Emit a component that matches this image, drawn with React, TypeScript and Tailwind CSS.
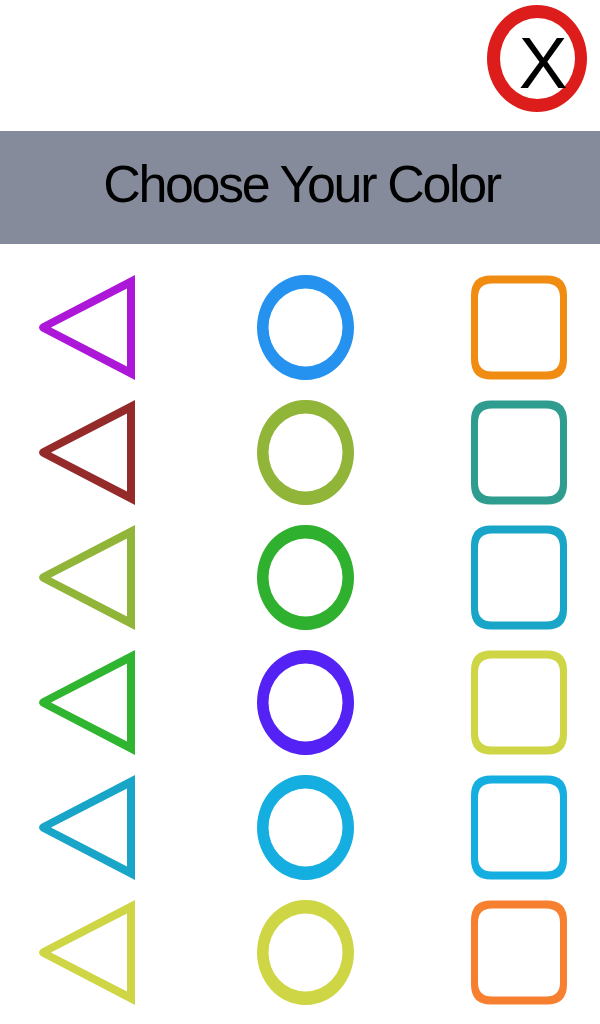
const rows = [
  ["#ad17d8", "#2492ee", "#f18c13"],
  ["#952a2a", "#91b538", "#2f9c90"],
  ["#91b538", "#2fb02f", "#18a5c8"],
  ["#2fb52f", "#5522f5", "#cfd646"],
  ["#18a5c8", "#14aee0", "#14aee0"],
  ["#cfd646", "#cfd646", "#f77f30"],
];

function Triangle({ color }: { color: string }) {
  return (
    <svg width="96" height="105" viewBox="0 -0.5 96 105" className="block">
      <path
        fillRule="evenodd"
        fill={color}
        d="M96 -0.5 V104.5 L2 55.5 Q-2 52 2 48.5 Z M88 13 L12 52 L88 91 Z"
      />
    </svg>
  );
}

function Circle({ color }: { color: string }) {
  return (
    <svg width="97" height="105" viewBox="0 -0.5 97 105" className="block">
      <path
        fillRule="evenodd"
        fill={color}
        d="M0 52 A48.5 52.5 0 1 0 97 52 A48.5 52.5 0 1 0 0 52 Z M11.5 52 A37 39 0 1 1 85.5 52 A37 39 0 1 1 11.5 52 Z"
      />
    </svg>
  );
}

function Square({ color }: { color: string }) {
  return (
    <svg width="96" height="105" viewBox="0 -0.5 96 105" className="block">
      <path
        fillRule="evenodd"
        fill={color}
        d="M20 0 H76 Q96 0 96 20 V84 Q96 104 76 104 H20 Q0 104 0 84 V20 Q0 0 20 0 Z M21 8 Q7 8 7 22 V82 Q7 96 21 96 H75 Q89 96 89 82 V22 Q89 8 75 8 Z"
      />
    </svg>
  );
}

export default function App() {
  return (
    <div className="w-[600px] h-[1024px] bg-white overflow-hidden font-['Liberation_Sans',Arial,sans-serif]">
      <div className="h-[131px] flex justify-end items-start pt-[5px] pr-[13px]">
        <div className="relative w-[100px] h-[107px]">
          <svg width="100" height="107" viewBox="0 0 100 107" className="block">
            <path
              fillRule="evenodd"
              fill="#dd1c1c"
              d="M0 53.5 A50 53.5 0 1 0 100 53.5 A50 53.5 0 1 0 0 53.5 Z M13 53.5 A37.5 40.5 0 1 1 88 53.5 A37.5 40.5 0 1 1 13 53.5 Z"
            />
          </svg>
          <span className="absolute inset-0 flex items-center justify-center text-[73px] leading-none text-black pt-[8px] pl-[12px]">X</span>
        </div>
      </div>
      <div className="h-[113px] bg-[#858b9b] flex items-center justify-center">
        <h1 className="text-[52px] leading-none font-normal text-black tracking-[-2.35px] pb-[8px] pl-[3px] whitespace-nowrap">Choose Your Color</h1>
      </div>
      <div className="pt-[31px] pl-[39px] flex flex-col gap-[20px]">
        {rows.map((r, i) => (
          <div key={i} className="grid grid-cols-[218px_214px_96px]">
            <Triangle color={r[0]} />
            <Circle color={r[1]} />
            <Square color={r[2]} />
          </div>
        ))}
      </div>
    </div>
  );
}
